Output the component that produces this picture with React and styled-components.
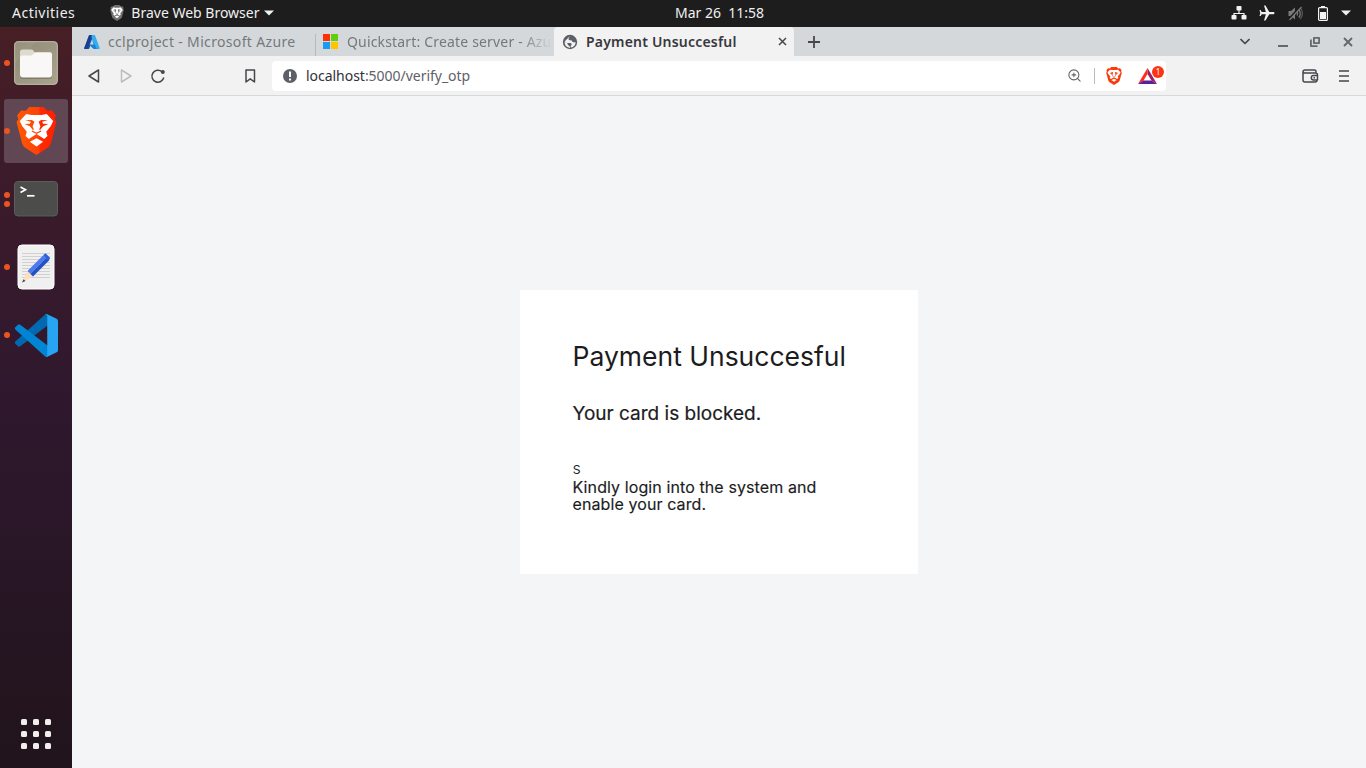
import React from 'react';
import styled, { createGlobalStyle } from 'styled-components';
import { MdAirplanemodeActive } from 'react-icons/md';
import { ZoomIn } from 'lucide-react';

const GlobalStyle = createGlobalStyle`
  * { box-sizing: border-box; }
  html, body { margin: 0; width: 100%; height: 100%; overflow: hidden; }
  body { font-family: "Noto Sans", "Open Sans", sans-serif; }
  svg { display: block; flex: none; }
`;

const Desktop = styled.div`
  width: 1366px;
  height: 768px;
  display: flex;
  flex-direction: column;
  background: #f3f5f7;
`;

const TopBar = styled.header`
  flex: 0 0 27px;
  display: flex;
  align-items: center;
  padding-bottom: 1px;
  background: #1d1d1d;
  color: #f0f0f0;
`;

const Label = styled.span`
  display: block;
  font-size: ${(p) => p.$size || 14}px;
  font-weight: ${(p) => p.$weight || 400};
  letter-spacing: ${(p) => p.$track || 0}px;
  line-height: 20px;
  white-space: pre;
`;

const TopLeft = styled.div`
  width: 675px;
  display: flex;
  align-items: center;
  padding-left: 12px;
`;

const AppMenu = styled.div`
  display: flex;
  align-items: center;
  margin-left: 35px;
`;

const AppName = styled.div`
  width: 133px;
  margin-left: 7px;
`;

const Status = styled.div`
  margin-left: auto;
  display: flex;
  align-items: center;
  gap: 13px;
  padding-right: 15px;
`;

const Workspace = styled.div`
  flex: 1;
  min-height: 0;
  display: flex;
`;

const Dock = styled.nav`
  flex: 0 0 72px;
  display: flex;
  flex-direction: column;
  align-items: center;
  gap: 4px;
  padding: 4px 0 19px;
  background: linear-gradient(180deg, #471f25 0%, #3b1b2b 22%, #2f182e 50%, #261523 80%, #21141b 100%);
`;

const DockItem = styled.div`
  width: 64px;
  height: 64px;
  display: grid;
  grid-template-columns: 6px 1fr 6px;
  align-items: center;
  justify-items: center;
  border-radius: 3px;
  background: ${(p) => (p.$active ? '#604753' : 'transparent')};
`;

const Dots = styled.div`
  display: flex;
  flex-direction: column;
  gap: 3px;
`;

const Dot = styled.i`
  width: 6px;
  height: 6px;
  border-radius: 50%;
  background: #e95420;
`;

const AppsGrid = styled.div`
  margin-top: auto;
  display: grid;
  grid-template-columns: repeat(3, 6px);
  gap: 6px;
`;

const AppsCell = styled.i`
  height: 6px;
  border-radius: 1.5px;
  background: #f0efed;
`;

const Browser = styled.main`
  flex: 1;
  min-width: 0;
  display: flex;
  flex-direction: column;
`;

const TabStrip = styled.div`
  flex: 0 0 29px;
  display: flex;
  align-items: center;
  background: #d4d8db;
  color: #73777a;
`;

const Tab = styled.div`
  width: ${(p) => p.$width}px;
  height: 29px;
  flex: none;
  display: flex;
  align-items: center;
  overflow: hidden;
  padding: 0 7px 0 ${(p) => p.$inset}px;
  border-radius: 4px 4px 0 0;
  background: ${(p) => (p.$active ? '#f2f2f2' : 'transparent')};
  color: ${(p) => (p.$active ? '#37383d' : '#75787a')};
`;

const TabTitle = styled.div`
  flex: 1;
  min-width: 0;
  overflow: hidden;
  margin-left: ${(p) => p.$gap}px;
  ${(p) => p.$fade && 'margin-right: -5px; mask-image: linear-gradient(90deg, #000 84%, transparent 100%);'}
`;

const TabDivider = styled.i`
  width: 1px;
  height: 22px;
  align-self: flex-end;
  background: #b6bbbf;
`;

const NewTab = styled.div`
  margin-left: 14px;
`;

const WindowControls = styled.div`
  margin-left: auto;
  padding-right: 13px;
  display: flex;
  align-items: center;
`;

const Control = styled.div`
  margin-left: ${(p) => p.$gap || 0}px;
`;

const Toolbar = styled.div`
  flex: 0 0 40px;
  display: flex;
  align-items: center;
  padding-left: 14px;
  background: #f2f2f2;
  border-bottom: 1px solid #d6d9db;
`;

const NavButtons = styled.div`
  width: 186px;
  display: flex;
  align-items: center;
  gap: 16px;
`;

const BookmarkSlot = styled.div`
  margin-left: auto;
  padding-right: 14px;
`;

const AddressBar = styled.div`
  width: 894px;
  height: 30px;
  display: flex;
  align-items: center;
  padding: 0 1px 0 10px;
  border-radius: 4px;
  background: #fff;
  color: #5e6067;
`;

const Address = styled.div`
  flex: 1;
  margin-left: 8px;
`;

const Host = styled.span`
  color: #303136;
`;

const Separator = styled.i`
  width: 1px;
  height: 16px;
  margin: 0 11px 0 12px;
  background: #b9babd;
`;

const Rewards = styled.div`
  position: relative;
  width: 27px;
  height: 22px;
  margin-left: 16px;
  padding-top: 3px;
`;

const Badge = styled.span`
  position: absolute;
  right: 1px;
  top: 1px;
  width: 12px;
  height: 12px;
  border-radius: 50%;
  background: #fb3417;
  color: #fff;
  font-size: 8px;
  line-height: 12px;
  text-align: center;
`;

const ToolbarEnd = styled.div`
  margin-left: auto;
  padding-right: 17px;
  display: flex;
  align-items: center;
  gap: 20px;
`;

const Page = styled.section`
  flex: 1;
  display: flex;
  justify-content: center;
  align-items: flex-start;
  padding-top: 194px;
  background: #f3f5f7;
`;

const Card = styled.article`
  width: 398px;
  height: 284px;
  padding: 48px 52px 0 52.5px;
  background: #fff;
  color: #1c1c1e;
  font-family: Inter, sans-serif;
`;

const Heading = styled.h1`
  margin: 0;
  font-size: 26.5px;
  font-weight: 400;
  line-height: 36px;
  letter-spacing: 0;
  white-space: nowrap;
`;

const Lead = styled.p`
  margin: 28px 0 0;
  font-size: 19px;
  font-weight: 400;
  line-height: 24px;
  -webkit-text-stroke: 0.2px currentColor;
  white-space: nowrap;
`;

const Stray = styled.p`
  margin: 33px 0 0;
  font-size: 16px;
  font-weight: 300;
  line-height: 18px;
`;

const Note = styled.p`
  margin: 2px 0 0;
  font-size: 16px;
  line-height: 17px;
  font-weight: 400;
  letter-spacing: 0.1px;
  -webkit-text-stroke: 0.15px currentColor;
  white-space: nowrap;
`;

function Lion({ w, h, color, gradient }) {
  const fill = gradient ? 'url(#lionFill)' : color;
  return (
    <svg width={w} height={h} viewBox="0 0 40 48" preserveAspectRatio="none">
      <defs>
        <linearGradient id="lionFill" gradientUnits="userSpaceOnUse" x1="0" y1="0" x2="40" y2="0">
          <stop offset="0" stopColor="#ff5a00" />
          <stop offset=".55" stopColor="#ff420a" />
          <stop offset=".6" stopColor="#ff2a00" />
          <stop offset="1" stopColor="#ff1f00" />
        </linearGradient>
      </defs>
      <path d="M13 0h14l3.500 3.700 4.500-.2 4 5-1.300 3.500L39.500 15 34 36.500q-.8 2.500-3 4.200L20 48 9 40.700q-2.200-1.700-3-4.200L.5 15l1.800-3L1 8.500l4-5 4.500.2z" fill={fill} />
      <path d="m10 7 5 1h10l5-1 6.300 7-2.300 5-4.500 5.800 1.200 4.200-3.200 3-7.500-5-7.500 5-3.200-3 1.200-4.200L6 19l-2.300-5z" fill="#fff" />
      <path d="m13.500 34.700 6.500-3.500 6.500 3.500L20 39.500z" fill="#fff" />
      <path d="m9 13.300 6.500-.3 2.500 1.700-1 2.600-.8 2.200 1.300 3.300-1 .2-3-3.700-5-2.300 5-.3 1-2zM31 13.300l-6.500-.3-2.500 1.700 1 2.600.8 2.200-1.300 3.300 1 .2 3-3.700 5-2.300-5-.3-1-2z" fill={fill} />
      <path d="m15.500 24 4.500 2.300 4.500-2.300" fill="none" stroke={fill} strokeWidth="1.200" />
    </svg>
  );
}

const Caret = () => (
  <svg width="10" height="6" viewBox="0 0 10 6"><path d="M0 .5h10L5 5.500z" fill="#f0f0f0" /></svg>
);

const NetworkIcon = () => (
  <svg width="16" height="14" viewBox="0 0 16 14">
    <path d="M8 4v3.500M3 10V7.500h10V10" fill="none" stroke="#f2f2f2" strokeWidth="1.200" />
    <g fill="#f2f2f2">
      <rect x="5.500" width="5" height="4.500" rx=".8" />
      <rect x=".5" y="9" width="5" height="4.500" rx=".8" />
      <rect x="10.500" y="9" width="5" height="4.500" rx=".8" />
    </g>
  </svg>
);

const PlaneIcon = styled(MdAirplanemodeActive)`
  transform: rotate(90deg);
  margin: 0 -1px 0 -2px;
`;

const MutedIcon = () => (
  <svg width="17" height="15" viewBox="0 0 17 15" fill="none" stroke="#7b7b7b">
    <path d="M.5 5H3l4-3.500v12L3 10H.5z" fill="#7b7b7b" stroke="none" />
    <path d="M9 5.500q1.500 2 0 4M10.800 3.500q3 4 0 8" strokeWidth="1.300" />
    <path d="M12.500 1.800q4 5.700-.3 11.400" strokeWidth="1.300" opacity=".6" />
    <path d="M.5 13.500 12.500.5" stroke="#1d1d1d" strokeWidth="2" />
    <path d="M1.500 14 13.500 1" strokeWidth="1.200" />
  </svg>
);

const BatteryIcon = () => (
  <svg width="10" height="15" viewBox="0 0 10 15">
    <rect x=".6" y="1.600" width="8.800" height="12.800" rx="1" fill="none" stroke="#f2f2f2" strokeWidth="1.200" />
    <path d="M3 0h4v1.500H3zM2 6h6v7H2z" fill="#f2f2f2" />
  </svg>
);

const FilesIcon = () => (
  <svg width="46" height="46" viewBox="0 0 46 46">
    <defs>
      <linearGradient id="filesBack" x1="0" y1="0" x2="1" y2="1">
        <stop offset="0" stopColor="#8f8a75" /><stop offset="1" stopColor="#aaa48f" />
      </linearGradient>
    </defs>
    <rect x="1" y="1" width="44" height="44" rx="4.500" fill="url(#filesBack)" />
    <path d="M24 1 1 24V6q0-5 5-5z" fill="#fff" opacity=".06" />
    <rect x="1.700" y="1.700" width="42.600" height="42.600" rx="4" fill="none" stroke="#b9b49f" strokeWidth="1" />
    <path d="M7 12q0-2.500 2.500-2.500h9q1 0 1.800 1l2.200 3V20H7z" fill="#dedad0" />
    <path d="M7 17.500q0-2 2-2h9.500l4-3.200H37q2 0 2 2V35q0 3-3 3H10q-3 0-3-3z" fill="#5b5645" opacity=".45" transform="translate(0 1)" />
    <path d="M7 17.500q0-2 2-2h9.500l4-3.200H37q2 0 2 2V34.500q0 3-3 3H10q-3 0-3-3z" fill="#f9f8f6" />
  </svg>
);

const TerminalIcon = () => (
  <svg width="46" height="38" viewBox="0 0 46 38">
    <rect x="1" y="1.500" width="44" height="36" rx="4" fill="#292027" />
    <rect x="1.500" y="1.500" width="43" height="34.500" rx="3.500" fill="#4c4c4b" stroke="#5d5d5b" />
    <path d="m7.500 7 5 2.800-5 2.800" fill="none" stroke="#fff" strokeWidth="1.700" />
    <path d="M14 15.800h7.500" stroke="#fff" strokeWidth="1.700" />
  </svg>
);

const EditorIcon = () => (
  <svg width="38" height="46" viewBox="0 0 38 46">
    <rect x="1" y="1" width="36" height="44" rx="4" fill="#f0f0f0" stroke="#fff" />
    <path d="M5 9.500h28M5 12.500h28M5 15.500h28M5 18.500h28M5 21.500h28M5 24.500h28M5 27.500h28M5 30.500h28M5 33.500h28" stroke="#d0d0d0" />
    <path d="m5 38.500 5.500-11.500 5.500 5.500z" fill="#fcdfbd" />
    <path d="m5 38.500 1.500-3.300 2 1.800z" fill="#48484a" />
    <path d="M10.500 27 26.500 11l2.800 2.800-16 16z" fill="#4c79ef" />
    <path d="m13.300 29.800 16-16 2.700 2.700-16 16z" fill="#2353c2" />
    <path d="m26.500 11 1.200-1.200q.8-.6 1.600.2l3.400 3.500q.6.800-.2 1.600L31.500 17z" fill="#2861dd" />
  </svg>
);

const CodeIcon = () => (
  <svg width="43" height="43" viewBox="0 0 100 100">
    <path fill="#0069b0" d="M96.461 10.796 75.857.876a6.230 6.230 0 0 0-7.107 1.207l-67.451 61.500a4.167 4.167 0 0 0 .004 6.162l5.510 5.009a4.167 4.167 0 0 0 5.320.236l81.228-61.620c2.725-2.067 6.639-.124 6.639 3.297v-.24a6.250 6.250 0 0 0-3.539-5.630Z" />
    <path fill="#0085d5" d="m96.461 89.204-20.604 9.920a6.229 6.229 0 0 1-7.107-1.207l-67.451-61.500a4.167 4.167 0 0 1 .004-6.162l5.510-5.009a4.167 4.167 0 0 1 5.320-.236l81.228 61.620c2.725 2.067 6.639.124 6.639-3.297v.24a6.250 6.250 0 0 1-3.539 5.630Z" />
    <path fill="#27a5f2" d="M75.858 99.126a6.232 6.232 0 0 1-7.108-1.210c2.306 2.307 6.250.674 6.250-2.588V4.672c0-3.262-3.944-4.895-6.250-2.589a6.232 6.232 0 0 1 7.108-1.210l20.600 9.908A6.250 6.250 0 0 1 100 16.413v67.174a6.250 6.250 0 0 1-3.541 5.633l-20.601 9.906Z" />
  </svg>
);

const AzureIcon = () => (
  <svg width="16" height="16" viewBox="0 0 16 16">
    <path d="M5.500 1h4.300L5.400 14.300q-.2.700-1 .7H1q-1 0-.7-1z" fill="#16509f" />
    <path d="M11.500 10.500H5l4.500 4.300h4z" fill="#0c70ce" />
    <path d="M6.500 1h3.700q.8 0 1 .7L15.700 14q.3 1-.7 1h-4q1 0 .7-1z" fill="#35aef1" />
    <path d="M6.500 1H8L3.700 14.500l-.9.500H1q-1 0-.7-1L4.700 1.700Q5 1 5.700 1z" fill="#173f91" />
    <path d="M8 5 5.500 11l5 4H13z" fill="#1683dc" />
    <path d="m8 5.500 1.700 5H6z" fill="#d4d8db" />
  </svg>
);

const MicrosoftIcon = () => (
  <svg width="15" height="15" viewBox="0 0 15 15">
    <path d="M0 0h7v7H0z" fill="#fb3005" /><path d="M8 0h7v7H8z" fill="#63ce07" />
    <path d="M0 8h7v7H0z" fill="#189bf2" /><path d="M8 8h7v7H8z" fill="#ffc400" />
  </svg>
);

const GlobeIcon = () => (
  <svg width="16" height="16" viewBox="0 0 16 16">
    <circle cx="8" cy="8" r="7.200" fill="#5c6067" />
    <path d="M7.800 2.300 6.500 4.800q0 1.300 1.300 1.500l2 .3q.2 1.700 1.700 1.700h2.100q-.1 3.300-3.200 4.900l-1.700.4V12q.9-.6.900-1.700 0-1.400-1.500-1.400H5.300L2.500 7.300q0 5.500 5 6.500l.5.100v-1.200L6 11l-1-2.200-2.600-1" fill="#f2f2f2" fillRule="evenodd" />
  </svg>
);

const Stroke = ({ w, h, d, color = '#46474b', width = 1.500, children }) => (
  <svg width={w} height={h} viewBox={`0 0 ${w} ${h}`} fill="none" stroke={color} strokeWidth={width} strokeLinejoin="round">
    <path d={d} />
    {children}
  </svg>
);

const ReloadIcon = () => (
  <Stroke w={16} h={16} d="M13.800 9.500a6 6 0 1 1-1.800-5.700">
    <circle cx="12.800" cy="4" r="2" fill="#46474b" stroke="none" />
  </Stroke>
);

const AlertIcon = () => (
  <svg width="16" height="16" viewBox="0 0 16 16">
    <circle cx="8" cy="8" r="7" fill="#5d6067" />
    <path d="M7 3.500h2v5.500H7zM7 10.500h2v2H7z" fill="#fff" />
  </svg>
);

const TriangleIcon = () => (
  <svg width="19" height="16" viewBox="0 0 19 16">
    <path d="M9.500 0 0 16l5.500-3.500L9.500 6z" fill="#ff2c18" />
    <path d="M9.500 0 19 16l-5.500-3.500L9.500 6z" fill="#9e1f63" />
    <path d="M0 16h19l-5.500-3.500h-8z" fill="#5f1d9a" />
  </svg>
);

const WalletIcon = () => (
  <Stroke w={17} h={14} width={1.500} d="M14 4V2.500Q14 1 12.500 1H3Q1 1 1 3v8q0 2 2 2h10q2 0 2-2M1 3.200Q1 4 3 4h10.500q2 0 2 2v5">
    <path d="M15.500 6.500h-4a2.200 2.200 0 0 0 0 4.400h4M11.500 8.700h1.500" />
  </Stroke>
);

function DockApp({ active, dots = 1, children }) {
  return (
    <DockItem $active={active}>
      <Dots>{Array.from({ length: dots }, (_, i) => <Dot key={i} />)}</Dots>
      {children}
    </DockItem>
  );
}

export default function App() {
  return (
    <Desktop>
      <GlobalStyle />
      <TopBar>
        <TopLeft>
          <Label $track={0.5}>Activities</Label>
          <AppMenu>
            <Lion w={14} h={16} color="#707070" />
            <AppName><Label>Brave Web Browser</Label></AppName>
            <Caret />
          </AppMenu>
        </TopLeft>
        <Label>Mar 26  11:58</Label>
        <Status>
          <NetworkIcon />
          <PlaneIcon size={18} />
          <MutedIcon />
          <BatteryIcon />
          <Caret />
        </Status>
      </TopBar>
      <Workspace>
        <Dock>
          <DockApp><FilesIcon /></DockApp>
          <DockApp active><Lion w={41} h={48} gradient /></DockApp>
          <DockApp dots={2}><TerminalIcon /></DockApp>
          <DockApp><EditorIcon /></DockApp>
          <DockApp><CodeIcon /></DockApp>
          <AppsGrid>{Array.from({ length: 9 }, (_, i) => <AppsCell key={i} />)}</AppsGrid>
        </Dock>
        <Browser>
          <TabStrip>
            <Tab $width={243} $inset={12}>
              <AzureIcon />
              <TabTitle $gap={8}><Label $track={0.34}>cclproject - Microsoft Azure</Label></TabTitle>
            </Tab>
            <TabDivider />
            <Tab $width={238} $inset={7}>
              <MicrosoftIcon />
              <TabTitle $gap={9} $fade><Label $track={0.17}>Quickstart: Create server - Azure</Label></TabTitle>
            </Tab>
            <Tab $width={240} $inset={8} $active>
              <GlobeIcon />
              <TabTitle $gap={8}><Label $weight={600} $track={0.2}>Payment Unsuccesful</Label></TabTitle>
              <Stroke w={9} h={9} d="m1 1 7 7m0-7-7 7" />
            </Tab>
            <NewTab><Stroke w={12} h={12} width={1.800} d="M6 0v12M0 6h12" /></NewTab>
            <WindowControls>
              <Control><Stroke w={10} h={7} width={1.700} d="m.5 1 4.500 4.500L9.500 1" /></Control>
              <Control $gap={28}><Stroke w={10} h={10} width={2} color="#65696e" d="M0 9h10" /></Control>
              <Control $gap={22}>
                <Stroke w={10} h={10} width={1.800} color="#65696e" d="M3.900.9h5.200v5.200H3.900zM.9 2.500v6.600h6.600" />
              </Control>
              <Control $gap={23}><Stroke w={10} h={10} width={1.900} color="#65696e" d="m1 1 8 8m0-8L1 9" /></Control>
            </WindowControls>
          </TabStrip>
          <Toolbar>
            <NavButtons>
              <Stroke w={16} h={16} d="M12.500 2v12L3 8z" />
              <Stroke w={16} h={16} color="#bcbdbe" d="M3.500 2v12L13 8z" />
              <ReloadIcon />
              <BookmarkSlot><Stroke w={16} h={16} d="M4 2h8.500v12l-4.250-3.200L4 14z" /></BookmarkSlot>
            </NavButtons>
            <AddressBar>
              <AlertIcon />
              <Address><Label as="div" $track={-0.03}><Host>localhost</Host>:5000/verify_otp</Label></Address>
              <ZoomIn size={15} strokeWidth={1.700} color="#606267" />
              <Separator />
              <Lion w={16} h={18} color="#fb3b0b" />
              <Rewards><TriangleIcon /><Badge>1</Badge></Rewards>
            </AddressBar>
            <ToolbarEnd>
              <WalletIcon />
              <Stroke w={10} h={12} width={1.700} d="M0 1h10M0 6h10M0 11h10" />
            </ToolbarEnd>
          </Toolbar>
          <Page>
            <Card>
              <Heading>Payment Unsuccesful</Heading>
              <Lead>Your card is blocked.</Lead>
              <Stray>s</Stray>
              <Note>Kindly login into the system and<br />enable your card.</Note>
            </Card>
          </Page>
        </Browser>
      </Workspace>
    </Desktop>
  );
}
